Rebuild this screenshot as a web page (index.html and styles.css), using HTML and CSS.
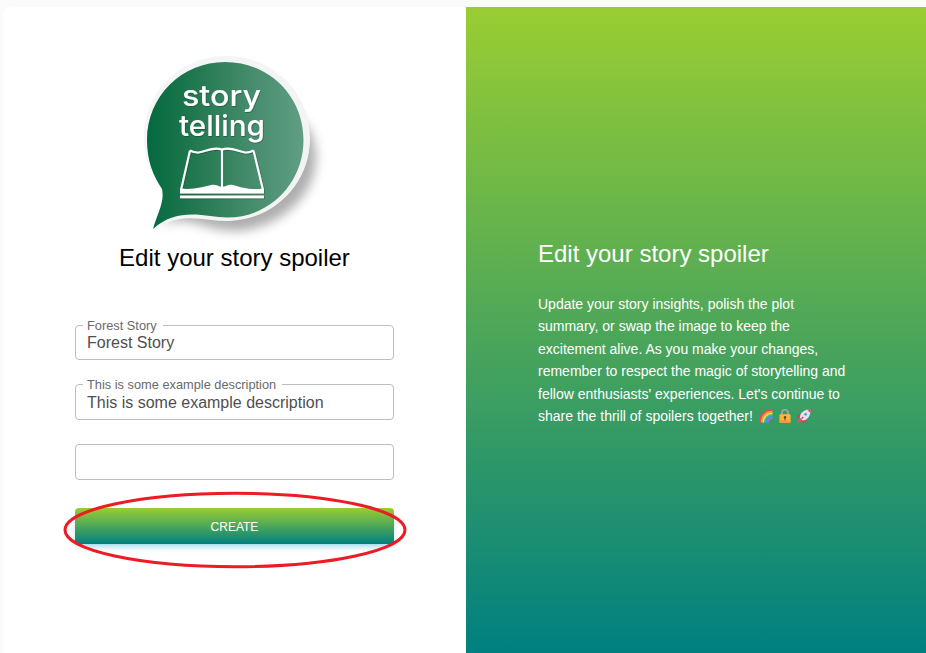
FILE: index.html
```
<!DOCTYPE html>
<html lang="en">
<head>
<meta charset="utf-8">
<title>Edit your story spoiler</title>
<link rel="stylesheet" href="styles.css">
</head>
<body>
<main class="card">
  <section class="form-side">
    <svg class="logo" viewBox="130 50 210 190" width="210" height="190" role="img" aria-label="story telling">
      <defs>
        <linearGradient id="bubble" x1="0" y1="0" x2="1" y2="0">
          <stop offset="0" stop-color="#04693f"/>
          <stop offset=".3" stop-color="#21784f"/>
          <stop offset=".65" stop-color="#448b6b"/>
          <stop offset="1" stop-color="#609e84"/>
        </linearGradient>
        <linearGradient id="rim" x1="0" y1="0" x2="1" y2="1">
          <stop offset="0" stop-color="#f5f6f6"/>
          <stop offset="1" stop-color="#f1f3f3"/>
        </linearGradient>
        <filter id="soft" x="-20%" y="-20%" width="140%" height="140%"><feGaussianBlur stdDeviation="5.500"/></filter>
        <filter id="drop"><feDropShadow dx=".6" dy=".8" stdDeviation=".7" flood-color="#00351f" flood-opacity=".5"/></filter>
      </defs>
      <path d="M160 225C190 213 205 232 238 231C286 227 325 187 314 142C308 118 280 100 270 110L190 200Z" fill="#777" opacity=".6" filter="url(#soft)"/>
      <path d="M153 229C185 210 206 222 230 221C276 219 310 182 310 139C310 94 275 56 226 56C181 56 144 91 144 138C144 160 152 174 161 187C164 199 158 215 153 229Z" fill="url(#rim)"/>
      <path d="M153 229C157 214 165 202 162 189C153 175 147 161 147 140C147 96 182 62 225 62C269 62 303.500 96 303.500 140C303.500 183 270 217.500 227 217.500C206 217 178 206 153 229Z" fill="url(#bubble)"/>
      <g filter="url(#drop)" fill="#fff">
        <text class="logo-word" x="182" y="106" textLength="79" lengthAdjust="spacingAndGlyphs">story</text>
        <text class="logo-word" x="179" y="136" textLength="86" lengthAdjust="spacingAndGlyphs">telling</text>
        <path d="M190 150.500L181 190M253.500 150.500L263 190M222 149.500V188M190 150.500C202 157 209 145 222 149.500C235 145 242 157 253.500 150.500" fill="none" stroke="#fff" stroke-width="2.100" stroke-linejoin="round"/>
        <path d="M180 188.500C194 190 202 187 211 185C216 184 219 187 222 187C226 187 228 184 233 185C242 188 250 190 264 188.500V193.500H180ZM180 195.500H264V198.200H180Z"/>
      </g>
    </svg>
    <h4 class="title">Edit your story spoiler</h4>
    <form class="form">
      <fieldset class="field first"><legend>Forest Story</legend><span>Forest Story</span></fieldset>
      <fieldset class="field"><legend>This is some example description</legend><span>This is some example description</span></fieldset>
      <fieldset class="field"></fieldset>
      <div class="action">
        <button class="create" type="button">CREATE</button>
        <svg class="ring" viewBox="0 0 344 78" width="344" height="78" aria-hidden="true"><ellipse cx="172" cy="39" rx="170" ry="36.700"/></svg>
      </div>
    </form>
  </section>
  <section class="info-side">
    <h4 class="info-title">Edit your story spoiler</h4>
    <p class="info-text">Update your story insights, polish the plot<br>summary, or swap the image to keep the<br>excitement alive. As you make your changes,<br>remember to respect the magic of storytelling and<br>fellow enthusiasts' experiences. Let's continue to<br>share the thrill of spoilers together!
      <span class="icons">
        <svg viewBox="0 0 14 14" width="14" height="14" fill="none" stroke-width="1.800">
          <path d="M1 13.500C1 6 6 1 13.500 1" stroke="#f9405b"/><path d="M2.700 13.500C2.700 7 7 2.700 13.500 2.700" stroke="#ff9a32"/><path d="M4.300 13.500C4.300 8 8 4.300 13.500 4.300" stroke="#ffe052"/><path d="M5.900 13.500C5.900 9 9 5.900 13.500 5.900" stroke="#42c77c"/><path d="M7.500 13.500C7.500 10 10 7.500 13.500 7.500" stroke="#3698ef"/><path d="M9 13.500C9 11 11 9 13.500 9" stroke="#a470dc"/>
        </svg>
        <svg viewBox="0 0 14 14" width="14" height="14">
          <path d="M4 6V3.800A3 3 0 0 1 10 3.800V6" fill="none" stroke="#aaa6a7" stroke-width="1.600"/><rect x="1.500" y="5.300" width="11" height="8.400" rx="1" fill="#ffb636"/><path d="M1.500 11.500H12.500V13.700H1.500Z" fill="#f59a38"/><circle cx="7" cy="8.300" r="1.200" fill="#57433e"/><path d="M6.500 8H7.500V11.500H6.500Z" fill="#57433e"/>
        </svg>
        <svg viewBox="0 0 14 14" width="14" height="14">
          <path d="M5 4.500L1 6L0 9L4.500 9ZM9.800 9L8.500 13L5.300 14L5 9.500Z" fill="#ee315f"/><path d="M2.600 9L0 14L5.500 11.500Z" fill="#f64869"/><path d="M2.800 8.500C3 3.200 8 .2 13.700.2C13.700 6 11 11 5.700 11.600Z" fill="#e6e1f0"/><path d="M10.300.7L14 0L13.300 4Z" fill="#f23b62"/><circle cx="8.600" cy="5.300" r="1.300" fill="#4d94d4" stroke="#b3a9c4" stroke-width=".5"/><path d="M4.600 9.600L6.200 8" stroke="#d72658" stroke-width="1.200"/>
        </svg>
      </span>
    </p>
  </section>
</main>
</body>
</html>
```
FILE: styles.css
```
* { box-sizing: border-box; }

body {
  margin: 0;
  height: 653px;
  overflow: hidden;
  padding: 7px 0 0 3px;
  background: #fbfbfb;
  font-family: "Liberation Sans", Arial, sans-serif;
}

.card {
  display: grid;
  grid-template-columns: 463px 1fr;
  height: 646px;
  background: #fff;
  border-radius: 8px 0 0 0;
}

.form-side {
  padding: 43px 72px 0;
}

.logo {
  display: block;
  margin-left: 55px;
}

.logo-word {
  font: 500 29px Inter, sans-serif;
}

.title {
  margin: 3px 0 52px;
  font-size: 24px;
  font-weight: 400;
  line-height: 29px;
  text-align: center;
  color: #000;
}

.field {
  width: 319px;
  height: 36px;
  min-width: 0;
  margin: 0 0 24px;
  padding: 0 11px;
  border: 1px solid #bdbdbd;
  border-radius: 4px;
  font-size: 16px;
  line-height: 20px;
  color: #4f4f4f;
}

.field:has(legend) {
  height: 42px;
  margin: -6px 0 24px;
  padding-left: 7px;
}

.field.first {
  height: 41px;
  margin-top: -5px;
}

.field legend {
  height: 13px;
  padding: 0 6px 0 4px;
  font-size: 12.800px;
  line-height: 13px;
  color: #6a6a6a;
}

.field span {
  display: block;
  padding: 2px 0 0 4px;
}

.field.first span {
  padding-top: 1px;
}

.action {
  position: relative;
  margin-top: 28px;
}

.create {
  display: block;
  width: 319px;
  height: 36px;
  padding: 2px 0 0;
  border: 0;
  border-radius: 4px 4px 0 0;
  background: linear-gradient(#9acd32, #008080);
  box-shadow: 0 4px 9px -4px rgba(20, 164, 210, .75);
  font: 12px/34px "Liberation Sans", Arial, sans-serif;
  color: #fff;
}

.ring {
  position: absolute;
  left: -12px;
  top: -17px;
  fill: none;
  stroke: #ed1c24;
  stroke-width: 3;
}

.info-side {
  padding: 232px 72px 0;
  background: linear-gradient(#9acd32, #008080);
  color: #fff;
}

.info-title {
  margin: 0 0 25px;
  font-size: 24px;
  font-weight: 400;
  line-height: 29px;
}

.info-text {
  margin: 0;
  font-size: 14px;
  line-height: 22.400px;
  white-space: nowrap;
}

.icons {
  display: inline-flex;
  gap: 5px;
  margin-left: 2px;
  vertical-align: -2px;
}
```
